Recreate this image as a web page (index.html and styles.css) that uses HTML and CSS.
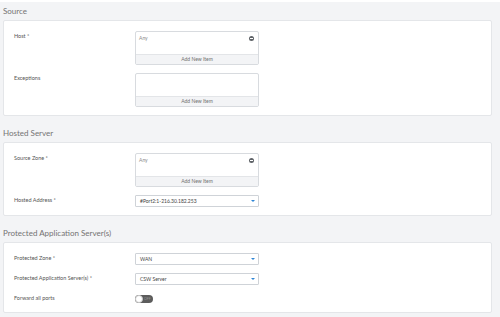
FILE: index.html
```html
<!DOCTYPE html>
<html lang="en">
<head>
  <meta charset="UTF-8">
  <meta name="viewport" content="width=device-width, initial-scale=1.0">
  <title>Business Application Rule</title>
  <link rel="stylesheet" href="styles.css">
</head>
<body>
  <div class="page">

    <!-- Source -->
    <section class="section">
      <h2 class="section-title">Source</h2>
      <div class="panel">
        <div class="field">
          <label class="field-label">Host *</label>
          <div class="list-box">
            <div class="list-items">
              <span class="list-item">Any</span>
              <span class="remove-icon"></span>
            </div>
            <div class="list-add">Add New Item</div>
          </div>
        </div>
        <div class="field">
          <label class="field-label">Exceptions</label>
          <div class="list-box">
            <div class="list-items"></div>
            <div class="list-add">Add New Item</div>
          </div>
        </div>
      </div>
    </section>

    <!-- Hosted Server -->
    <section class="section">
      <h2 class="section-title">Hosted Server</h2>
      <div class="panel">
        <div class="field">
          <label class="field-label">Source Zone *</label>
          <div class="list-box">
            <div class="list-items">
              <span class="list-item">Any</span>
              <span class="remove-icon"></span>
            </div>
            <div class="list-add">Add New Item</div>
          </div>
        </div>
        <div class="field">
          <label class="field-label">Hosted Address *</label>
          <div class="select-box">
            <span>#Port2:1-216.30.182.253</span>
            <span class="select-arrow"></span>
          </div>
        </div>
      </div>
    </section>

    <!-- Protected Application Server(s) -->
    <section class="section">
      <h2 class="section-title">Protected Application Server(s)</h2>
      <div class="panel">
        <div class="field">
          <label class="field-label">Protected Zone *</label>
          <div class="select-box">
            <span>WAN</span>
            <span class="select-arrow"></span>
          </div>
        </div>
        <div class="field">
          <label class="field-label">Protected Application Server(s) *</label>
          <div class="select-box">
            <span>CSW Server</span>
            <span class="select-arrow"></span>
          </div>
        </div>
        <div class="field">
          <label class="field-label">Forward all ports</label>
          <div class="toggle">
            <span class="toggle-knob"></span>
            <span class="toggle-text">OFF</span>
          </div>
        </div>
      </div>
    </section>

  </div>
</body>
</html>
```

FILE: styles.css
```css
/* Global reset */
* {
  margin: 0;
  padding: 0;
  box-sizing: border-box;
  font-family: 'Lato', 'Liberation Sans', sans-serif;
}

body {
  background-color: #f3f4f6;
  border-top: 2px solid #fff;
  color: #555;
}

.page {
  padding: 0 8px 0 3px;
}

/* Sections */
.section {
  margin-bottom: 8px;
}

.section-title {
  font-size: 8px;
  font-weight: 400;
  line-height: 18px;
  color: #737373;
}

.panel {
  background-color: #fff;
  border: 1px solid #e4e6e9;
  border-radius: 2px;
  padding: 10px 10px 8px 10px;
  display: flex;
  flex-direction: column;
  gap: 8px;
}

/* Rows */
.field {
  display: grid;
  grid-template-columns: 121px 124px;
  align-items: start;
}

.field-label {
  font-size: 5.5px;
  line-height: 11px;
  color: #555;
}

/* List box with items */
.list-box {
  border: 1px solid #d8dbdf;
  border-radius: 2px;
  overflow: hidden;
}

.list-items {
  height: 22px;
  display: flex;
  justify-content: space-between;
  align-items: flex-start;
  padding: 3px 4px 0 3px;
}

.list-item {
  font-size: 5px;
  line-height: 6px;
  color: #8a8a8a;
}

.remove-icon {
  width: 5px;
  height: 5px;
  border-radius: 50%;
  background-color: #5f6368;
  position: relative;
  margin-top: 1px;
}

.remove-icon::after {
  content: '';
  position: absolute;
  left: 1px;
  right: 1px;
  top: 2px;
  height: 1px;
  background-color: #fff;
}

.list-add {
  height: 10px;
  border-top: 1px solid #e3e5e8;
  background-color: #f3f4f6;
  font-size: 5px;
  line-height: 9px;
  text-align: center;
  color: #707070;
}

/* Select */
.select-box {
  height: 12px;
  border: 1px solid #cfd3d8;
  border-radius: 1px;
  background-color: #fff;
  display: flex;
  justify-content: space-between;
  align-items: center;
  padding: 0 3px 0 4px;
  font-size: 5px;
  color: #444;
}

.select-arrow {
  width: 0;
  height: 0;
  border-left: 2px solid transparent;
  border-right: 2px solid transparent;
  border-top: 2px solid #2f86d6;
}

/* Toggle switch */
.toggle {
  width: 18px;
  height: 8px;
  margin-top: 2px;
  border-radius: 4px;
  background-color: #5c5c5c;
  display: flex;
  align-items: center;
}

.toggle-knob {
  width: 8px;
  height: 8px;
  border-radius: 50%;
  background-color: #fff;
  border: 1px solid #c9c9c9;
}

.toggle-text {
  font-size: 3.5px;
  color: #999;
  margin-left: 1px;
}
```
